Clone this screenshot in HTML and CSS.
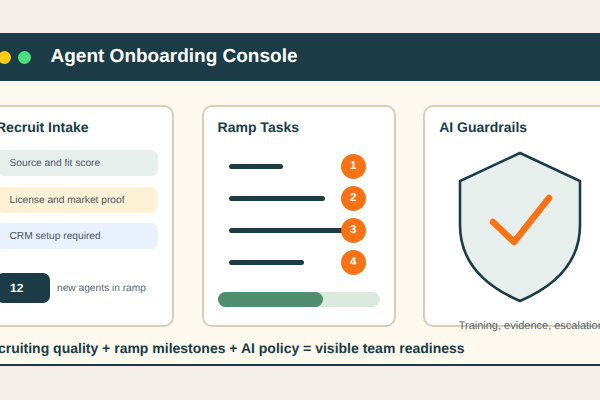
FILE: index.html
```html
<!DOCTYPE html>
<html lang="en">
<head>
  <meta charset="UTF-8">
  <meta name="viewport" content="width=device-width, initial-scale=1.0">
  <title>Agent Onboarding Console</title>
  <link rel="stylesheet" href="styles.css">
</head>
<body>
  <div class="console">
    <!-- Title bar -->
    <header class="titlebar">
      <span class="dot dot-red"></span>
      <span class="dot dot-yellow"></span>
      <span class="dot dot-green"></span>
      <h1>Agent Onboarding Console</h1>
    </header>

    <main class="panel">
      <div class="cards">
        <section class="card card-intake">
          <h2>Recruit Intake</h2>
          <ul class="intake-list">
            <li class="intake-row row-green">Source and fit score</li>
            <li class="intake-row row-yellow">License and market proof</li>
            <li class="intake-row row-blue">CRM setup required</li>
          </ul>
          <div class="ramp-count">
            <span class="count-box">12</span>
            <span class="count-label">new agents in ramp</span>
          </div>
        </section>

        <section class="card">
          <h2>Ramp Tasks</h2>
          <div class="tasks">
            <div class="task"><span class="task-line" style="width: 54px"></span><span class="badge">1</span></div>
            <div class="task"><span class="task-line" style="width: 96px"></span><span class="badge">2</span></div>
            <div class="task"><span class="task-line" style="width: 118px"></span><span class="badge">3</span></div>
            <div class="task"><span class="task-line" style="width: 75px"></span><span class="badge">4</span></div>
          </div>
          <div class="progress"><div class="progress-fill" style="width: 65%"></div></div>
        </section>

        <section class="card">
          <h2>AI Guardrails</h2>
          <svg class="shield" width="124" height="152" viewBox="0 0 124 152">
            <path d="M62 2 L122 30 V74 C122 111 97 135 62 150 C27 135 2 111 2 74 V30 Z" fill="#e7efec" stroke="#1b3c46" stroke-width="2.6"/>
            <path d="M35 71 L56 91 L91 47" fill="none" stroke="#f97316" stroke-width="6.5" stroke-linecap="round" stroke-linejoin="round"/>
          </svg>
          <p class="caption">Training, evidence, escalation</p>
        </section>
      </div>

      <p class="summary">Recruiting quality + ramp milestones + AI policy = visible team readiness</p>
    </main>
  </div>
</body>
</html>
```

FILE: styles.css
```css
/* General Reset */
* {
  box-sizing: border-box;
  margin: 0;
  padding: 0;
}

html,
body {
  height: 100%;
  overflow: hidden;
}

body {
  font-family: "Liberation Sans", Arial, sans-serif;
  text-rendering: geometricPrecision;
  background: #f4f0e9;
  color: #1b3c46;
}

/* The console is wider than the window and cut off on both sides */
.console {
  width: 700px;
  margin: 33px 0 0 -50px;
}

/* Title bar */
.titlebar {
  display: flex;
  align-items: center;
  height: 48px;
  padding-left: 27.5px;
  background: #1b3c46;
  color: white;
}

.dot {
  width: 13px;
  height: 13px;
  border-radius: 50%;
  margin-right: 7px;
}

.dot-red {
  background: #f87171;
}

.dot-yellow {
  background: #facc15;
}

.dot-green {
  background: #4ade80;
}

h1 {
  font-size: 19px;
  font-weight: bold;
  margin-left: 13px;
}

/* Cream panel */
.panel {
  height: 285px;
  padding: 24px 0 0 30px;
  background: #fdf9ef;
  border-bottom: 2px solid #1b3c46;
}

.cards {
  display: flex;
  gap: 27.4px;
}

.card {
  flex: none;
  width: 194.2px;
  height: 222px;
  padding: 12px 14px 0;
  background: white;
  border: 2px solid #d8cdb8;
  border-radius: 10px;
}

h2 {
  font-size: 14px;
  font-weight: bold;
  line-height: 17px;
}

/* Recruit Intake */
.intake-list {
  list-style: none;
  margin-top: 14px;
}

.intake-row {
  height: 26px;
  margin-bottom: 10.5px;
  padding-left: 13.5px;
  border-radius: 7px;
  font-size: 10.2px;
  line-height: 28px;
  color: #4b5563;
}

.row-green {
  background: #e7efec;
}

.row-yellow {
  background: #fdf2d6;
}

.row-blue {
  background: #e9f1fd;
}

.ramp-count {
  display: flex;
  align-items: center;
  gap: 7px;
  margin-top: 23.5px;
}

.count-box {
  width: 54px;
  height: 30px;
  padding-left: 14px;
  background: #1b3c46;
  border-radius: 7px;
  color: white;
  font-size: 12px;
  font-weight: bold;
  line-height: 30px;
}

.count-label {
  padding-top: 2px;
  font-size: 10.2px;
  color: #5a6470;
}

/* Ramp Tasks */
.tasks {
  margin-top: 17.5px;
  padding-left: 11px;
}

.task {
  display: grid;
  align-items: center;
  height: 25px;
  margin-bottom: 7px;
}

.task-line,
.badge {
  grid-area: 1 / 1;
}

.task-line {
  height: 5px;
  background: #1b3c46;
  border-radius: 3px;
}

.badge {
  justify-self: end;
  width: 25px;
  height: 25px;
  margin-right: 14px;
  background: #f97316;
  border-radius: 50%;
  color: white;
  font-size: 11.5px;
  font-weight: bold;
  line-height: 25px;
  text-align: center;
}

.progress {
  height: 15px;
  margin-top: 17.5px;
  background: #dbeadf;
  border-radius: 8px;
}

.progress-fill {
  height: 100%;
  background: #4f8f70;
  border-radius: 8px;
}

/* AI Guardrails */
.shield {
  display: block;
  margin: 15px 0 0 18.4px;
}

.caption {
  margin: 16.5px 0 0 19.5px;
  font-size: 11px;
  color: #5a6470;
  white-space: nowrap;
}

/* Bottom line */
.summary {
  margin-top: 12px;
  font-size: 14px;
  font-weight: bold;
  line-height: 18px;
  white-space: nowrap;
}
```
